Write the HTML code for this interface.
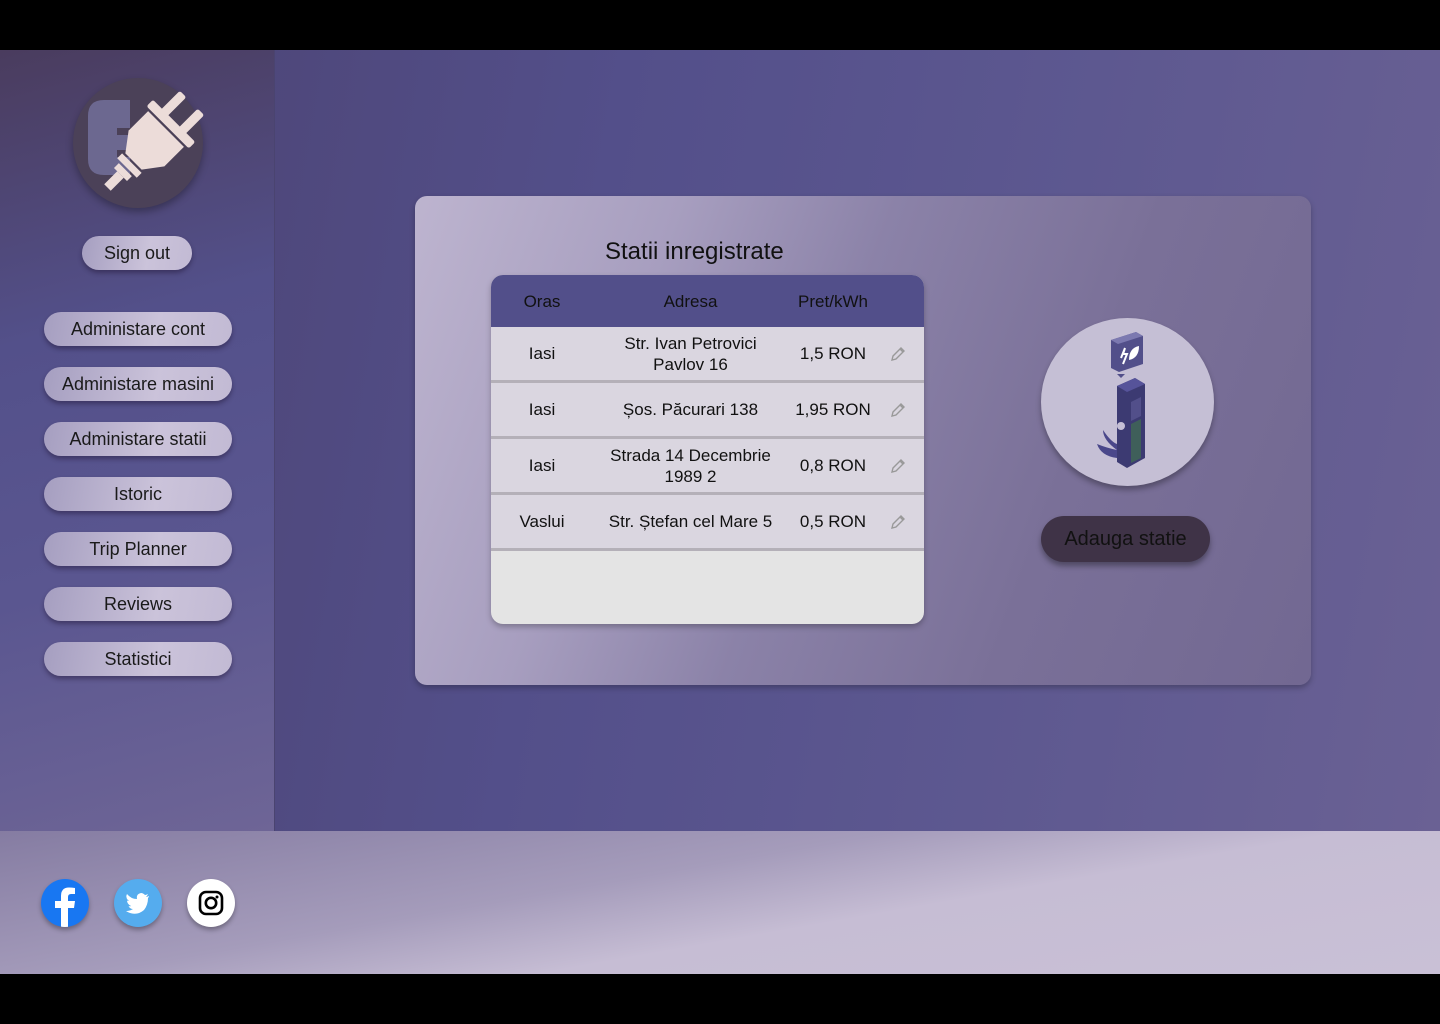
<!DOCTYPE html>
<html><head><meta charset="utf-8"><style>
*{margin:0;padding:0;box-sizing:border-box}
body{width:1440px;height:1024px;background:#000;font-family:"Liberation Sans",Roboto,sans-serif;position:relative;overflow:hidden}
.main{position:absolute;left:0;top:50px;width:1440px;height:781px;background:linear-gradient(100deg,#4b4270 0%,#534f8a 40%,#5d5890 70%,#6a6194 100%)}
.side{position:absolute;left:0;top:50px;width:275px;height:781px;background:linear-gradient(165deg,#4a3c5e 0%,#53508a 35%,#5a5690 65%,#6e6596 100%);border-right:1px solid #4a4470}
.foot{position:absolute;left:0;top:831px;width:1440px;height:143px;background:linear-gradient(170deg,#857ca2 0%,#a59cbb 40%,#c6bdd4 60%,#c9c0d6 100%)}
.btn{position:absolute;height:34px;border-radius:17px;background:linear-gradient(100deg,#a59ec0 0%,#cbc3da 60%,#c2bad4 100%);box-shadow:0 3px 5px rgba(30,20,50,.45);text-align:center;line-height:34px;font-size:18px;color:#1a1a1a}
.logo{position:absolute;left:73px;top:78px;width:130px;height:130px;border-radius:50%;background:#4b4158;box-shadow:0 4px 8px rgba(0,0,0,.3)}
.card{position:absolute;left:415px;top:196px;width:896px;height:489px;border-radius:12px;background:linear-gradient(110deg,#bdb4cf 0%,#a79ebf 25%,#8b82a8 45%,#7a7098 70%,#726892 100%);box-shadow:0 3px 6px rgba(0,0,0,.25)}
.title{position:absolute;left:605px;top:238px;font-size:24px;color:#111}
.tbl{position:absolute;left:491px;top:275px;width:433px;height:349px;border-radius:12px;overflow:hidden;background:#e4e4e4;box-shadow:0 3px 6px rgba(0,0,0,.25)}
.hdr{height:52px;background:#524f8a;position:relative;font-size:17px;color:#111}
.row{height:56px;background:#dad6e0;border-bottom:3px solid #b4b0b8;position:relative;font-size:17px;color:#111}
.c{position:absolute;top:0;height:100%;display:flex;align-items:center;justify-content:center;text-align:center;line-height:21px}
.c1{left:0;width:102px}.c2{left:102px;width:195px}.c3{left:297px;width:90px}.c4{left:390px;width:34px}
.circ{position:absolute;left:1041px;top:318px;width:173px;height:168px;border-radius:50%;background:#c5bfd5;box-shadow:0 4px 6px rgba(0,0,0,.3)}
.add{position:absolute;left:1041px;top:516px;width:169px;height:46px;border-radius:23px;background:#3f3347;box-shadow:0 4px 6px rgba(0,0,0,.35);color:#111;font-size:20px;text-align:center;line-height:46px}
.soc{position:absolute;top:879px;width:48px;height:48px;border-radius:50%;box-shadow:0 3px 5px rgba(0,0,0,.3)}
</style></head><body>
<div class="main"></div>
<div class="side"></div>
<div class="foot"></div>
<div class="logo"><svg width="130" height="130" viewBox="0 0 130 130" style="overflow:visible">
<path d="M15 38 Q15 22 31 22 L57 22 L57 50 L44 50 L44 57 L57 57 L57 72 L44 72 L44 79 L57 79 L57 97 L31 97 Q15 97 15 81Z" fill="#6c6890"/>
<g transform="translate(80 64) scale(1.15) rotate(45) translate(-70 -68)" fill="#ecdcd9">
<rect x="55" y="20" width="8" height="24" rx="2"/><rect x="77" y="20" width="8" height="24" rx="2"/>
<rect x="44" y="42" width="52" height="8" rx="2"/>
<path d="M48 52 L92 52 L92 76 L80 92 L60 92 L48 76Z"/>
<rect x="58" y="94" width="24" height="6"/><rect x="62" y="102" width="16" height="6"/><rect x="66" y="108" width="8" height="16"/>
</g></svg></div>
<div class="btn" style="left:82px;top:236px;width:110px">Sign out</div>
<div class="btn" style="left:44px;top:312px;width:188px">Administare cont</div>
<div class="btn" style="left:44px;top:367px;width:188px">Administare masini</div>
<div class="btn" style="left:44px;top:422px;width:188px">Administare statii</div>
<div class="btn" style="left:44px;top:477px;width:188px">Istoric</div>
<div class="btn" style="left:44px;top:532px;width:188px">Trip Planner</div>
<div class="btn" style="left:44px;top:587px;width:188px">Reviews</div>
<div class="btn" style="left:44px;top:642px;width:188px">Statistici</div>
<div class="card"></div>
<div class="title">Statii inregistrate</div>
<div class="tbl">
<div class="hdr"><div class="c c1">Oras</div><div class="c c2">Adresa</div><div class="c c3" style="left:297px;width:90px">Pret/kWh</div></div>
<div class="row"><div class="c c1">Iasi</div><div class="c c2">Str. Ivan Petrovici<br>Pavlov 16</div><div class="c c3">1,5 RON</div><div class="c c4"><svg width="18" height="18" viewBox="0 0 18 18"><path d="M3 15 L4 11 L12 3 L15 6 L7 14 Z M11 4 L14 7" fill="none" stroke="#999" stroke-width="1.4"/></svg></div></div>
<div class="row"><div class="c c1">Iasi</div><div class="c c2">Șos. Păcurari 138</div><div class="c c3">1,95 RON</div><div class="c c4"><svg width="18" height="18" viewBox="0 0 18 18"><path d="M3 15 L4 11 L12 3 L15 6 L7 14 Z M11 4 L14 7" fill="none" stroke="#999" stroke-width="1.4"/></svg></div></div>
<div class="row"><div class="c c1">Iasi</div><div class="c c2">Strada 14 Decembrie<br>1989 2</div><div class="c c3">0,8 RON</div><div class="c c4"><svg width="18" height="18" viewBox="0 0 18 18"><path d="M3 15 L4 11 L12 3 L15 6 L7 14 Z M11 4 L14 7" fill="none" stroke="#999" stroke-width="1.4"/></svg></div></div>
<div class="row"><div class="c c1">Vaslui</div><div class="c c2">Str. Ștefan cel Mare 5</div><div class="c c3">0,5 RON</div><div class="c c4"><svg width="18" height="18" viewBox="0 0 18 18"><path d="M3 15 L4 11 L12 3 L15 6 L7 14 Z M11 4 L14 7" fill="none" stroke="#999" stroke-width="1.4"/></svg></div></div>
</div>
<div class="circ"><svg width="173" height="168" viewBox="0 0 173 168">
<path d="M70 22 L95 14 L102 18 L102 46 L78 54 L70 50Z" fill="#524f8a"/>
<path d="M70 22 L95 14 L102 18 L77 26Z" fill="#7c79b0"/>
<path d="M80 40 L84 30 L82 36 L86 36 L82 46" fill="none" stroke="#fff" stroke-width="2"/>
<path d="M88 42 Q88 30 98 28 Q98 40 88 42Z" fill="#fff"/>
<path d="M76 56 L80 60 L84 56" fill="#524f8a"/>
<path d="M76 68 L94 60 L104 66 L104 140 L86 150 L76 144Z" fill="#3c3a72"/>
<path d="M76 68 L94 60 L104 66 L86 74Z" fill="#56539a"/>
<path d="M90 84 L100 79 L100 98 L90 103Z" fill="#524f8a"/>
<path d="M90 106 L100 101 L100 140 L90 145Z" fill="#3f5f5a"/>
<circle cx="80" cy="108" r="4" fill="#c5bfd5"/>
<path d="M76 140 Q60 138 56 126 Q66 130 76 132 Q62 122 62 112 Q70 124 76 126" fill="#4a478a"/>
</svg></div>
<div class="add">Adauga statie</div>
<div class="soc" style="left:41px;background:#1877f2;overflow:hidden"><svg width="48" height="48" viewBox="0 0 48 48"><path d="M27 48 L27 29 L33 29 L34 22 L27 22 L27 18 Q27 15 30 15 L34 15 L34 9 Q31 8.5 28 8.5 Q20 8.5 20 17 L20 22 L14 22 L14 29 L20 29 L20 48Z" fill="#fff"/></svg></div>
<div class="soc" style="left:114px;background:#55acee"><svg width="48" height="48" viewBox="0 0 48 48"><path d="M35 17 Q33 18 32 18 Q33 17 34 15 Q32 16 31 16 Q29 14 27 14 Q22 15 23 20 Q17 20 13 15 Q11 19 15 22 Q14 22 13 21.5 Q13 25 17 27 Q16 27.5 14.5 27 Q16 30 19 30 Q16 32 12 32 Q22 38 30 31 Q34 26 34 19 Q35 18 35 17Z" fill="#fff"/></svg></div>
<div class="soc" style="left:187px;background:#fff"><svg width="48" height="48" viewBox="0 0 48 48"><rect x="13" y="13" width="22" height="22" rx="6" fill="none" stroke="#000" stroke-width="2.6"/><circle cx="24" cy="24" r="5.2" fill="none" stroke="#000" stroke-width="2.6"/><circle cx="30" cy="18" r="1.5" fill="#000"/></svg></div>
</body></html>
